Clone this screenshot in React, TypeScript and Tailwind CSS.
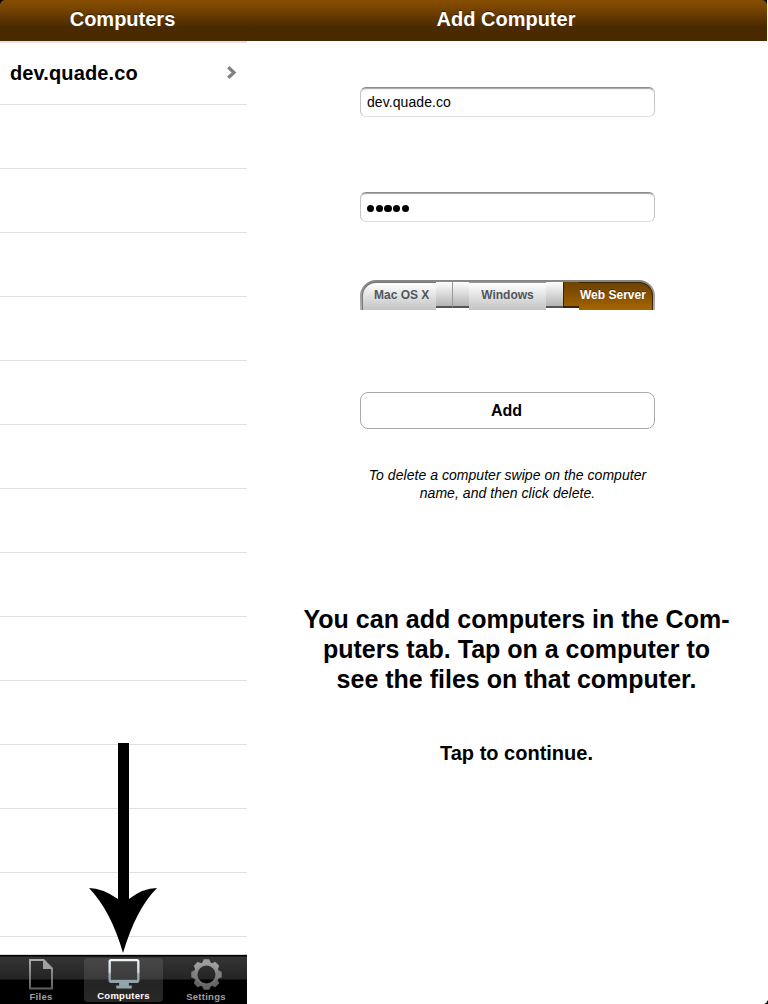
import React from "react";

const rows = Array.from({ length: 13 }, (_, i) => i);

function Title({ children }: { children: React.ReactNode }) {
  return (
    <h1 className="text-center text-[20px] leading-[38px] font-bold text-white [text-shadow:0_-1px_0_rgba(0,0,0,0.5)]">
      {children}
    </h1>
  );
}

function Field({ value, password }: { value: string; password?: boolean }) {
  return (
    <div className="flex h-[30px] w-[295px] items-center rounded-[6px] border border-t-[#8c8c8c] border-r-[#c4c4c4] border-b-[#dedede] border-l-[#c4c4c4] bg-white pl-[6px] shadow-[inset_0_2px_1px_-1px_#a5a5a5]">
      {password ? (
        <div className="mt-[3px] flex gap-[1.5px]">
          {value.split("").map((_, i) => (
            <span key={i} className="size-[7.2px] rounded-full bg-black" />
          ))}
        </div>
      ) : (
        <span className="text-[14px] leading-[20px] tracking-[0.07px]">{value}</span>
      )}
    </div>
  );
}

function Segments() {
  return (
    <div className="flex h-[30px] w-[295px] overflow-hidden rounded-t-[16px] bg-gradient-to-b from-[#858585] to-[#b5b5b5] pt-[2px] pr-[2px] pl-[2px] text-[12px] leading-[24px] font-bold">
      <div className="h-[28px] w-[74px] rounded-tl-[14px] border-t border-l border-[#777] bg-gradient-to-b from-white to-[#c3c3c3] pl-[11px] whitespace-nowrap text-[#50565d]">
        Mac OS X
      </div>
      <div className="flex h-[28px] w-[33px] bg-white">
        <div className="h-[26px] w-[17px] border-r border-b-2 border-r-[#999] border-b-[#555] bg-gradient-to-b from-white to-[#b5b5b5]" />
        <div className="h-[26px] w-[16px] border-b-2 border-[#555] bg-gradient-to-b from-white to-[#b5b5b5]" />
      </div>
      <div className="h-[28px] w-[77px] border-t border-[#999] bg-gradient-to-b from-white to-[#c3c3c3] text-center text-[#50565d]">
        Windows
      </div>
      <div className="h-[28px] w-[17px] bg-white">
        <div className="h-[26px] border-b-2 border-[#555] bg-gradient-to-b from-white to-[#b5b5b5]" />
      </div>
      <div className="h-[28px] w-[16px] bg-white">
        <div className="h-[26px] border-b-2 border-l border-[#3b2400] bg-gradient-to-b from-[#6c4100] to-[#9c5f00]" />
      </div>
      <div className="h-[28px] w-[74px] rounded-tr-[14px] border-t border-r border-[#3b2400] bg-gradient-to-b from-[#6c4100] to-[#a76500] pl-[1px] whitespace-nowrap text-white [text-shadow:0_-1px_0_rgba(0,0,0,0.4)]">
        Web Server
      </div>
    </div>
  );
}

function FileIcon() {
  return (
    <svg className="block h-[31px] w-[24px]" viewBox="0 0 24 31" fill="none">
      <defs>
        <linearGradient id="fileGray" x1="0" y1="0" x2="0" y2="1">
          <stop stopColor="#aaa" />
          <stop offset="1" stopColor="#606060" />
        </linearGradient>
      </defs>
      <path d="M1 1H14.5L23 9.5V29.5H1Z" stroke="url(#fileGray)" strokeWidth="2" />
      <path d="M14 1V10H23Z" fill="#a0a0a0" />
    </svg>
  );
}

function MonitorIcon() {
  return (
    <svg className="block h-[31px] w-[32px]" viewBox="0 0 32 31" fill="none">
      <defs>
        <linearGradient id="monitorSilver" x1="0" y1="0" x2="0" y2="31" gradientUnits="userSpaceOnUse">
          <stop stopColor="#f0f5f6" />
          <stop offset=".43" stopColor="#d4dfe1" />
          <stop offset=".5" stopColor="#a0b3ba" />
          <stop offset="1" stopColor="#7f929a" />
        </linearGradient>
      </defs>
      <rect x="1.2" y="1.2" width="29.6" height="22.3" rx="1.5" stroke="url(#monitorSilver)" strokeWidth="2.4" />
      <path d="M2 21.5H30V24H2ZM11 24H21V27.5H24V30.5H8V27.5H11Z" fill="#93a4aa" />
    </svg>
  );
}

function GearIcon() {
  return (
    <svg className="block h-[31px] w-[31px]" viewBox="-15.5 -15.5 31 31">
      <defs>
        <linearGradient id="gearGray" x1="0" y1="-15" x2="0" y2="15" gradientUnits="userSpaceOnUse">
          <stop stopColor="#aaa" />
          <stop offset=".5" stopColor="#818181" />
          <stop offset="1" stopColor="#606060" />
        </linearGradient>
      </defs>
      <circle r="10.8" fill="none" stroke="url(#gearGray)" strokeWidth="3.6" />
      {[0, 45, 90, 135, 180, 225, 270, 315].map((a) => (
        <path
          key={a}
          d="M-4.6 -11L-2.7 -15.2H2.7L4.6 -11Z"
          fill={a > 90 && a < 270 ? "#646464" : a === 90 || a === 270 ? "#808080" : "#9c9c9c"}
          transform={`rotate(${a})`}
        />
      ))}
    </svg>
  );
}

export default function App() {
  return (
    <div className="relative flex h-[1004px] w-[768px] flex-col overflow-hidden bg-white font-['Liberation_Sans',sans-serif] text-black">
      <header className="flex h-[41px] w-[767px] shrink-0 bg-black">
        <div className="flex w-full rounded-t-[5px] bg-[linear-gradient(#864d00_0%,#7a4600_18%,#4a2a00_65%,#482900_100%)]">
          <div className="w-[245px]">
            <Title>Computers</Title>
          </div>
          <div className="w-[522px]">
            <Title>Add Computer</Title>
          </div>
        </div>
      </header>
      <div className="flex min-h-0 flex-1">
        <aside className="flex w-[247px] flex-col">
          <div className="flex h-[64px] shrink-0 items-center justify-between border-t-2 border-b border-t-[#e4e2e2] border-b-[#e0e0e0] pr-[10px] pb-[2px] pl-[10px]">
            <span className="text-[20px] leading-[24px] font-bold tracking-[0.12px]">dev.quade.co</span>
            <svg className="h-[13px] w-[10px]" viewBox="0 0 10 13" fill="none">
              <path d="M1.3 1.3L7 6.5L1.3 11.7" stroke="#808080" strokeWidth="3.2" />
            </svg>
          </div>
          <div className="min-h-0 flex-1 overflow-hidden">
            {rows.map((i) => (
              <div key={i} className="h-[64px] border-b border-[#e0e0e0]" />
            ))}
          </div>
          <nav className="flex h-[50px] shrink-0 border-t border-[#d8d8d8] bg-[linear-gradient(#000_0,#000_1px,#343434_2px,#242424_24px,#000_25px)] text-[9.5px] leading-[12px] font-bold tracking-[0.27px] text-[#a0a0a0]">
            <div className="flex w-[82px] flex-col items-center pt-[4px]">
              <FileIcon />
              <span className="mt-[1px]">Files</span>
            </div>
            <div className="flex w-[83px] justify-center pt-[3px]">
              <div className="flex h-[44px] w-[79px] flex-col items-center rounded-[4px] bg-[linear-gradient(#484848_0,#3b3b3b_21px,#242424_22px,#282828)] pt-[1px] text-white">
                <MonitorIcon />
                <span className="mt-[1px]">Computers</span>
              </div>
            </div>
            <div className="flex w-[82px] flex-col items-center pt-[4px]">
              <GearIcon />
              <span className="mt-[1px]">Settings</span>
            </div>
          </nav>
        </aside>
        <main className="flex flex-1 flex-col items-center pt-[46px]">
          <div className="flex flex-col items-center">
            <Field value="dev.quade.co" />
            <div className="mt-[75px]">
              <Field value="12345" password />
            </div>
            <div className="mt-[58px]">
              <Segments />
            </div>
            <button className="mt-[82px] h-[37px] w-[295px] rounded-[8px] border border-[#aaa] pt-[1px] pr-[2px] text-[16px] font-bold">
              Add
            </button>
            <p className="mt-[37px] text-center text-[14px] leading-[18px] tracking-[0.04px] italic">
              To delete a computer swipe on the computer
              <br />
              name, and then click delete.
            </p>
          </div>
          <div className="mt-[102px] ml-[18px] text-center font-bold">
            <p className="text-[25px] leading-[30px] whitespace-nowrap">
              You can add computers in the Com-
              <br />
              puters tab. Tap on a computer to
              <br />
              see the files on that computer.
            </p>
            <p className="mt-[47px] text-[20px] leading-[24px]">Tap to continue.</p>
          </div>
        </main>
      </div>
      <svg className="absolute top-[743px] left-[89px] h-[210px] w-[68px]" viewBox="0 0 68 210">
        <path d="M29 0H40V156Q54 145 68 145Q47 166 34 210Q22 168 0 145Q13 145 29 156Z" />
      </svg>
      <svg className="absolute right-0 bottom-0 size-[4px]" viewBox="0 0 4 4">
        <path d="M4 0V4H0Q3 3 4 0Z" />
      </svg>
    </div>
  );
}
